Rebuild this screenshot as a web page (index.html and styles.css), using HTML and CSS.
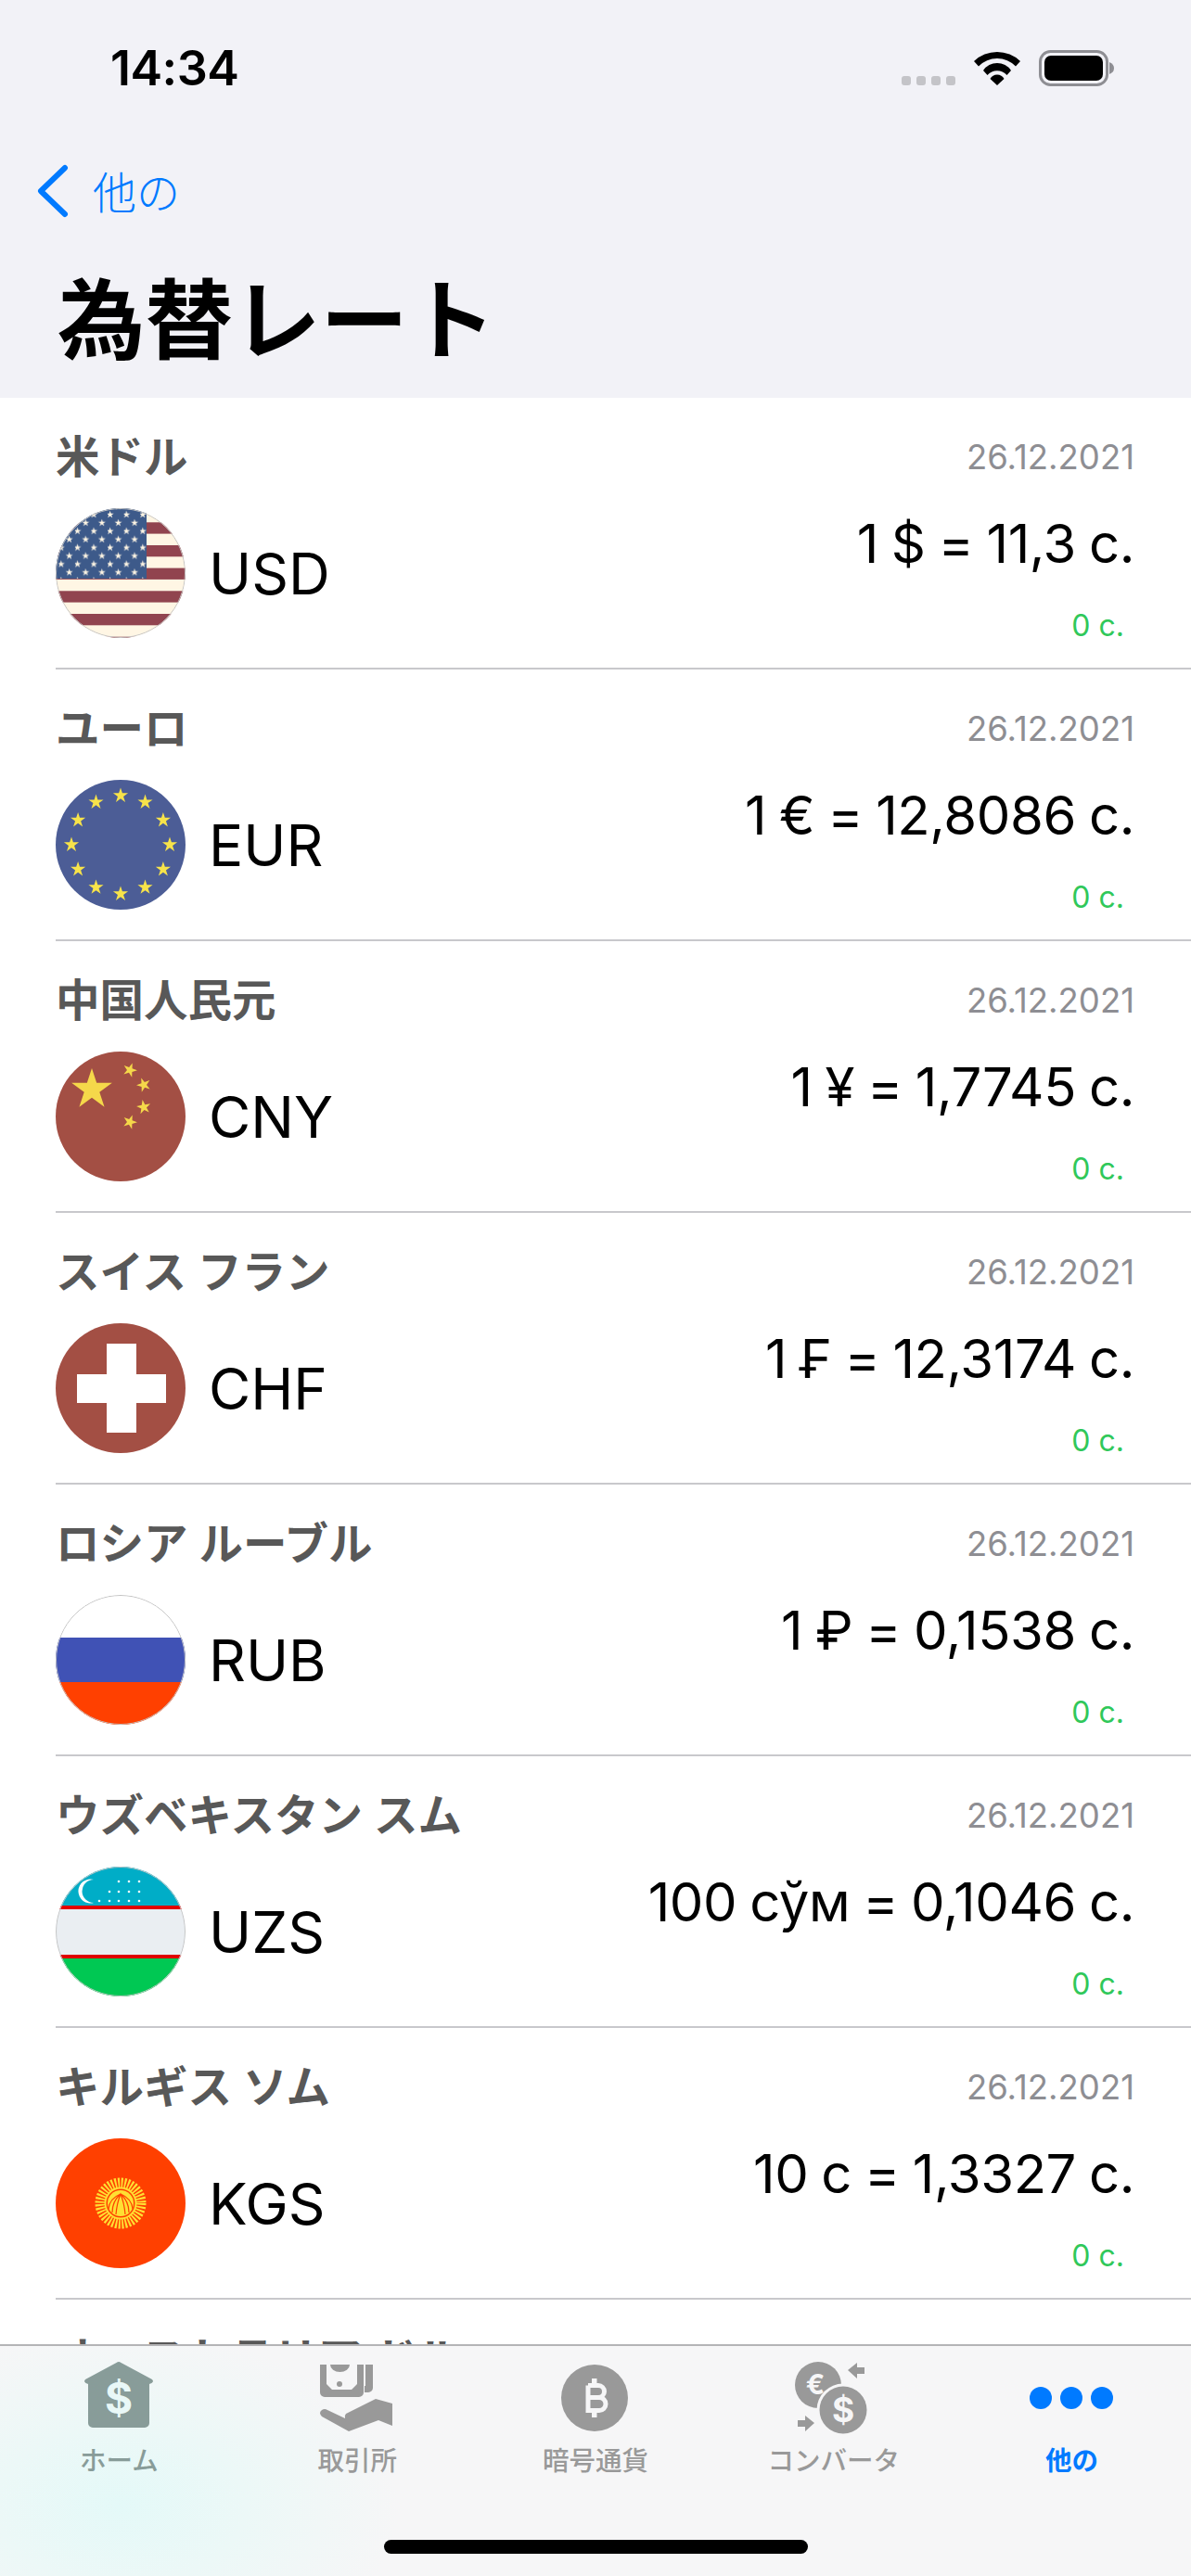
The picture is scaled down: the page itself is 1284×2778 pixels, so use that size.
FILE: index.html
```html
<!DOCTYPE html>
<html lang="ja">
<head>
    <title>為替レート</title>
    <link rel="stylesheet" href="styles.css">
</head>
<body>
    <svg class="defs">
        <defs>
            <polygon id="star" points="0,-1 .225,-.31 .95,-.31 .36,.12 .59,.81 0,.38 -.59,.81 -.36,.12 -.95,-.31 -.225,-.31"/>
            <pattern id="us-stars" width="17.6" height="17.8" patternUnits="userSpaceOnUse" x="3.3" y="-1.9">
                <use href="#star" transform="translate(2.6,8.9) scale(4.2)" fill="#fff6e4"/>
                <use href="#star" transform="translate(11.4,0) scale(4.2)" fill="#fff6e4"/>
                <use href="#star" transform="translate(11.4,17.8) scale(4.2)" fill="#fff6e4"/>
            </pattern>
        </defs>
    </svg>

    <div class="app">
        <header class="header">
            <div class="status-bar">
                <span class="time">14:34</span>
                <div class="status-icons">
                    <div class="signal"><i></i><i></i><i></i><i></i></div>
                    <svg class="wifi" width="50" height="37" viewBox="0 0 50 37">
                        <path d="M0 11A36 36 0 0 1 50 11L45 16.5A28 28 0 0 0 5 16.5Z"/>
                        <path d="M10 21A18 18 0 0 1 40 21L35.5 26A14 14 0 0 0 14.5 26Z"/>
                        <path d="M17.5 30A8.5 8.5 0 0 1 32.5 30L25 37Z"/>
                    </svg>
                    <svg class="battery" width="82" height="39" viewBox="0 0 82 39">
                        <rect x="1.5" y="1.5" width="72" height="36" rx="11" fill="none" stroke="#8e8e93" stroke-width="3"/>
                        <rect x="6" y="6" width="63" height="27" rx="7"/>
                        <path d="M76 13q5 2 5 6.500t-5 6.500Z" fill="#8e8e93"/>
                    </svg>
                </div>
            </div>
            <div class="nav">
                <svg class="chevron" width="36" height="58" viewBox="0 0 36 58">
                    <polyline points="31,4 5,29 31,54" fill="none" stroke="#007aff" stroke-width="6" stroke-linecap="round" stroke-linejoin="round"/>
                </svg>
                <span class="back-label">他の</span>
            </div>
            <h1 class="title">為替レート</h1>
        </header>

        <main class="list">
            <section class="row">
                <div class="row-top">
                    <span class="name">米ドル</span>
                    <span class="date">26.12.2021</span>
                </div>
                <div class="row-main">
                    <svg class="flag" viewBox="0 0 140 140">
                        <rect width="140" height="140" fill="#fff6e4"/>
                        <g fill="#91444f">
                            <rect y="15.300" width="140" height="12.300"/>
                            <rect y="40" width="140" height="12.300"/>
                            <rect y="64.600" width="140" height="12.300"/>
                            <rect y="89.300" width="140" height="12.300"/>
                            <rect y="114" width="140" height="12.300"/>
                            <rect y="138.700" width="140" height="12.300"/>
                        </g>
                        <rect width="98" height="76" fill="#3d5a8a"/>
                        <rect width="98" height="76" fill="url(#us-stars)"/>
                        <circle class="ring" cx="70" cy="70" r="69.500"/>
                    </svg>
                    <span class="code">USD</span>
                    <div class="values">
                        <span class="rate">1 $ = 11,3 с.</span>
                        <span class="change">0 с.</span>
                    </div>
                </div>
            </section>

            <section class="row">
                <div class="row-top">
                    <span class="name">ユーロ</span>
                    <span class="date">26.12.2021</span>
                </div>
                <div class="row-main">
                    <svg class="flag" viewBox="0 0 140 140">
                        <rect width="140" height="140" fill="#4c5d96"/>
                        <g fill="#f7e34a">
                            <use href="#star" transform="translate(70,17) scale(8.500)"/>
                            <use href="#star" transform="translate(96.500,24.100) scale(8.500)"/>
                            <use href="#star" transform="translate(115.900,43.500) scale(8.500)"/>
                            <use href="#star" transform="translate(123,70) scale(8.500)"/>
                            <use href="#star" transform="translate(115.900,96.500) scale(8.500)"/>
                            <use href="#star" transform="translate(96.500,115.900) scale(8.500)"/>
                            <use href="#star" transform="translate(70,123) scale(8.500)"/>
                            <use href="#star" transform="translate(43.500,115.900) scale(8.500)"/>
                            <use href="#star" transform="translate(24.100,96.500) scale(8.500)"/>
                            <use href="#star" transform="translate(17,70) scale(8.500)"/>
                            <use href="#star" transform="translate(24.100,43.500) scale(8.500)"/>
                            <use href="#star" transform="translate(43.500,24.100) scale(8.500)"/>
                        </g>
                    </svg>
                    <span class="code">EUR</span>
                    <div class="values">
                        <span class="rate">1 € = 12,8086 с.</span>
                        <span class="change">0 с.</span>
                    </div>
                </div>
            </section>

            <section class="row">
                <div class="row-top">
                    <span class="name">中国人民元</span>
                    <span class="date">26.12.2021</span>
                </div>
                <div class="row-main">
                    <svg class="flag" viewBox="0 0 140 140">
                        <rect width="140" height="140" fill="#a34f44"/>
                        <g fill="#f5d84a">
                            <use href="#star" transform="translate(39,41) scale(23)"/>
                            <use href="#star" transform="translate(80,20) rotate(20) scale(8)"/>
                            <use href="#star" transform="translate(95,36) rotate(-20) scale(8)"/>
                            <use href="#star" transform="translate(95,60) rotate(-10) scale(8)"/>
                            <use href="#star" transform="translate(80,76) rotate(20) scale(8)"/>
                        </g>
                    </svg>
                    <span class="code">CNY</span>
                    <div class="values">
                        <span class="rate">1 ¥ = 1,7745 с.</span>
                        <span class="change">0 с.</span>
                    </div>
                </div>
            </section>

            <section class="row">
                <div class="row-top">
                    <span class="name">スイス フラン</span>
                    <span class="date">26.12.2021</span>
                </div>
                <div class="row-main">
                    <svg class="flag" viewBox="0 0 140 140">
                        <rect width="140" height="140" fill="#a34f44"/>
                        <path d="M55 22H87V55H119V86H87V118H55V86H23V55H55Z" fill="#fff"/>
                    </svg>
                    <span class="code">CHF</span>
                    <div class="values">
                        <span class="rate">1 ₣ = 12,3174 с.</span>
                        <span class="change">0 с.</span>
                    </div>
                </div>
            </section>

            <section class="row">
                <div class="row-top">
                    <span class="name">ロシア ルーブル</span>
                    <span class="date">26.12.2021</span>
                </div>
                <div class="row-main">
                    <svg class="flag" viewBox="0 0 140 140">
                        <rect width="140" height="46" fill="#fff"/>
                        <rect y="46" width="140" height="48" fill="#4052b5"/>
                        <rect y="94" width="140" height="46" fill="#ff4000"/>
                        <circle class="ring" cx="70" cy="70" r="69.500"/>
                    </svg>
                    <span class="code">RUB</span>
                    <div class="values">
                        <span class="rate">1 ₽ = 0,1538 с.</span>
                        <span class="change">0 с.</span>
                    </div>
                </div>
            </section>

            <section class="row">
                <div class="row-top">
                    <span class="name">ウズベキスタン スム</span>
                    <span class="date">26.12.2021</span>
                </div>
                <div class="row-main">
                    <svg class="flag" viewBox="0 0 140 140">
                        <rect width="140" height="42" fill="#00adc7"/>
                        <rect y="42" width="140" height="4" fill="#e00000"/>
                        <rect y="46" width="140" height="49" fill="#eaeef2"/>
                        <rect y="95" width="140" height="4" fill="#e00000"/>
                        <rect y="99" width="140" height="41" fill="#00c853"/>
                        <path d="M41 14A13 13 0 1 0 41 39A11.500 11.500 0 1 1 41 14Z" fill="#fff"/>
                        <g fill="#fff">
                            <circle cx="68" cy="16" r="1.300"/><circle cx="79" cy="16" r="1.300"/><circle cx="90" cy="16" r="1.300"/>
                            <circle cx="58" cy="27" r="1.300"/><circle cx="68" cy="27" r="1.300"/><circle cx="79" cy="27" r="1.300"/><circle cx="90" cy="27" r="1.300"/>
                            <circle cx="47" cy="37" r="1.300"/><circle cx="58" cy="37" r="1.300"/><circle cx="68" cy="37" r="1.300"/><circle cx="79" cy="37" r="1.300"/><circle cx="90" cy="37" r="1.300"/>
                        </g>
                        <circle class="ring" cx="70" cy="70" r="69.500"/>
                    </svg>
                    <span class="code">UZS</span>
                    <div class="values">
                        <span class="rate">100 сўм = 0,1046 с.</span>
                        <span class="change">0 с.</span>
                    </div>
                </div>
            </section>

            <section class="row">
                <div class="row-top">
                    <span class="name">キルギス ソム</span>
                    <span class="date">26.12.2021</span>
                </div>
                <div class="row-main">
                    <svg class="flag" viewBox="0 0 140 140">
                        <rect width="140" height="140" fill="#ff4000"/>
                        <circle cx="70" cy="70" r="21.500" fill="none" stroke="#ffdf33" stroke-width="12" stroke-dasharray="1.900 1.477"/>
                        <circle cx="70" cy="70" r="17.500" fill="#ffdf33"/>
                        <circle cx="70" cy="70" r="15.500" fill="#ff4000"/>
                        <circle cx="70" cy="70" r="14" fill="#ffdf33"/>
                        <path d="M57 76Q58 65 70 60Q82 65 83 76M61 80Q61 68 70 60Q79 68 79 80M65 82Q66 70 70 60Q74 70 75 82" fill="none" stroke="#ff4000" stroke-width="1.200"/>
                    </svg>
                    <span class="code">KGS</span>
                    <div class="values">
                        <span class="rate">10 с = 1,3327 с.</span>
                        <span class="change">0 с.</span>
                    </div>
                </div>
            </section>

            <section class="row">
                <div class="row-top">
                    <span class="name">オーストラリア ドル</span>
                </div>
            </section>
        </main>

        <nav class="tabbar">
            <div class="tab tab-home">
                <svg width="110" height="100" viewBox="0 0 110 100">
                    <path d="M52.500 13Q55 11 57.500 13L91 31Q94 34 88 36V78A5 5 0 0 1 83 83H27A5 5 0 0 1 22 78V36Q16 34 19 31Z" fill="#889c99"/>
                    <text class="icon-sign" x="55" y="68" font-size="46" fill="#e9f8f7">$</text>
                </svg>
                <span>ホーム</span>
            </div>
            <div class="tab">
                <svg width="110" height="100" viewBox="0 0 110 100" fill="#999">
                    <path d="M15 15H22V36L28 42H49L55 36V15H62V45A5 5 0 0 1 57 50H20A5 5 0 0 1 15 45Z"/>
                    <path d="M64 15H72V40A5 5 0 0 1 67 45H63V38H64Z"/>
                    <path d="M26 15H47A10.500 8 0 0 1 26 15Z"/>
                    <circle cx="36" cy="36" r="3"/>
                    <path d="M43 68L75 52L93 57V81L78 75L46 87L17 71Q13 67 17 64Q20 62 23 64L42 73Q41 70 43 68Z"/>
                </svg>
                <span>取引所</span>
            </div>
            <div class="tab">
                <svg width="110" height="100" viewBox="0 0 110 100">
                    <circle cx="54" cy="51" r="36" fill="#999"/>
                    <path d="M47 37.500H58A6.500 6.500 0 0 1 58 50.500H47M47 50.500H59A7 7 0 0 1 59 64.500H47V37.500" fill="none" stroke="#f6f6f7" stroke-width="5"/>
                    <path d="M51 30H56.500V36H51ZM51 66H56.500V72H51Z" fill="#f6f6f7"/>
                </svg>
                <span>暗号通貨</span>
            </div>
            <div class="tab">
                <svg width="110" height="100" viewBox="0 0 110 100">
                    <circle cx="38" cy="37" r="25" fill="#999"/>
                    <text class="icon-sign" x="35" y="47" font-size="30" fill="#f6f6f7">€</text>
                    <circle cx="65" cy="64" r="28.500" fill="#f6f6f7"/>
                    <circle cx="65" cy="64" r="25.500" fill="#999"/>
                    <text class="icon-sign" x="65" y="77" font-size="37" fill="#f6f6f7">$</text>
                    <path d="M70 21L80 13V18H88V25H80V30ZM34 78L24 70V75H16V82H24V87Z" fill="#999"/>
                </svg>
                <span>コンバータ</span>
            </div>
            <div class="tab tab-active">
                <svg width="110" height="100" viewBox="0 0 110 100" fill="#007aff">
                    <circle cx="21" cy="51" r="12"/>
                    <circle cx="54" cy="51" r="12"/>
                    <circle cx="87" cy="51" r="12"/>
                </svg>
                <span>他の</span>
            </div>
            <div class="home-indicator"></div>
        </nav>
    </div>
</body>
</html>
```

FILE: styles.css
```css
body {
    margin: 0;
    background-color: #fff;
    font-family: Inter, "Noto Sans CJK JP", sans-serif;
    color: #000;
}

.defs {
    display: block;
    width: 0;
    height: 0;
}

.app {
    width: 1284px;
    height: 2778px;
    display: flex;
    flex-direction: column;
    overflow: hidden;
}

/* Top area */
.header {
    background-color: #f2f2f7;
    height: 429px;
    flex: none;
}

.status-bar {
    height: 146px;
    display: flex;
    justify-content: space-between;
    align-items: center;
    padding: 0 82px 0 119px;
}

.time {
    font-size: 52px;
    font-weight: 600;
    letter-spacing: -0.5px;
}

.status-icons {
    display: flex;
    align-items: flex-end;
    gap: 20px;
}

.signal {
    display: flex;
    gap: 6px;
    margin-bottom: 1px;
}

.signal i {
    width: 10px;
    height: 10px;
    border-radius: 3px;
    background-color: #c4c4c8;
}

.wifi {
    margin-bottom: 1px;
}

.nav {
    height: 120px;
    display: flex;
    align-items: center;
    gap: 25px;
    padding-left: 39px;
}

.back-label {
    margin-top: -3px;
    font-size: 47px;
    font-weight: 300;
    color: #007aff;
}

.title {
    margin: 0;
    padding-left: 62px;
    font-size: 94.5px;
    line-height: 160px;
    font-weight: 700;
}

/* Rate rows */
.list {
    flex: 1;
    min-height: 0;
    overflow: hidden;
}

.row {
    margin-left: 60px;
    padding-right: 61px;
    height: 291px;
    border-bottom: 2px solid #c8c8cc;
}

.row-top {
    display: flex;
    justify-content: space-between;
    align-items: center;
    padding-top: 36px;
    height: 56px;
}

.name {
    font-size: 47.5px;
    line-height: 56px;
    font-weight: 600;
    color: #585858;
}

.date {
    font-size: 36.5px;
    color: #8e8e93;
}

.row-main {
    display: flex;
    align-items: center;
    margin-top: 27px;
    height: 140px;
}

.flag {
    width: 140px;
    height: 140px;
    flex: none;
    border-radius: 50%;
}

.ring {
    fill: none;
    stroke: #c4c4c4;
    stroke-width: 1;
}

.code {
    margin-left: 25px;
    font-size: 62px;
}

.values {
    margin-left: auto;
    align-self: flex-start;
    display: flex;
    flex-direction: column;
    align-items: flex-end;
}

.rate {
    margin-top: 3px;
    font-size: 58px;
    line-height: 70px;
    letter-spacing: -0.4px;
    word-spacing: -2px;
}

.change {
    margin-top: 34px;
    padding-right: 11px;
    font-size: 32px;
    line-height: 40px;
    color: #30c85a;
}

/* Bottom tabs */
.tabbar {
    position: relative;
    flex: none;
    height: 248px;
    display: grid;
    grid-template-columns: repeat(5, 1fr);
    align-items: start;
    border-top: 2px solid #b4b4b6;
    background: radial-gradient(ellipse 300px 190px at 130px 172px, #e4f9f8 0%, #ecf8f7 45%, #f6f6f7 100%);
}

.tab {
    display: flex;
    flex-direction: column;
    align-items: center;
    padding-top: 5px;
    font-size: 28.5px;
    line-height: 38px;
    font-weight: 500;
    color: #999;
}

.tab svg {
    display: block;
}

.tab-home {
    color: #889c99;
}

.tab-active {
    color: #007aff;
    font-weight: 700;
}

.icon-sign {
    font-family: Inter, sans-serif;
    font-weight: 700;
    text-anchor: middle;
}

.home-indicator {
    position: absolute;
    left: 414px;
    top: 209px;
    width: 457px;
    height: 15px;
    border-radius: 8px;
    background-color: #000;
}
```
